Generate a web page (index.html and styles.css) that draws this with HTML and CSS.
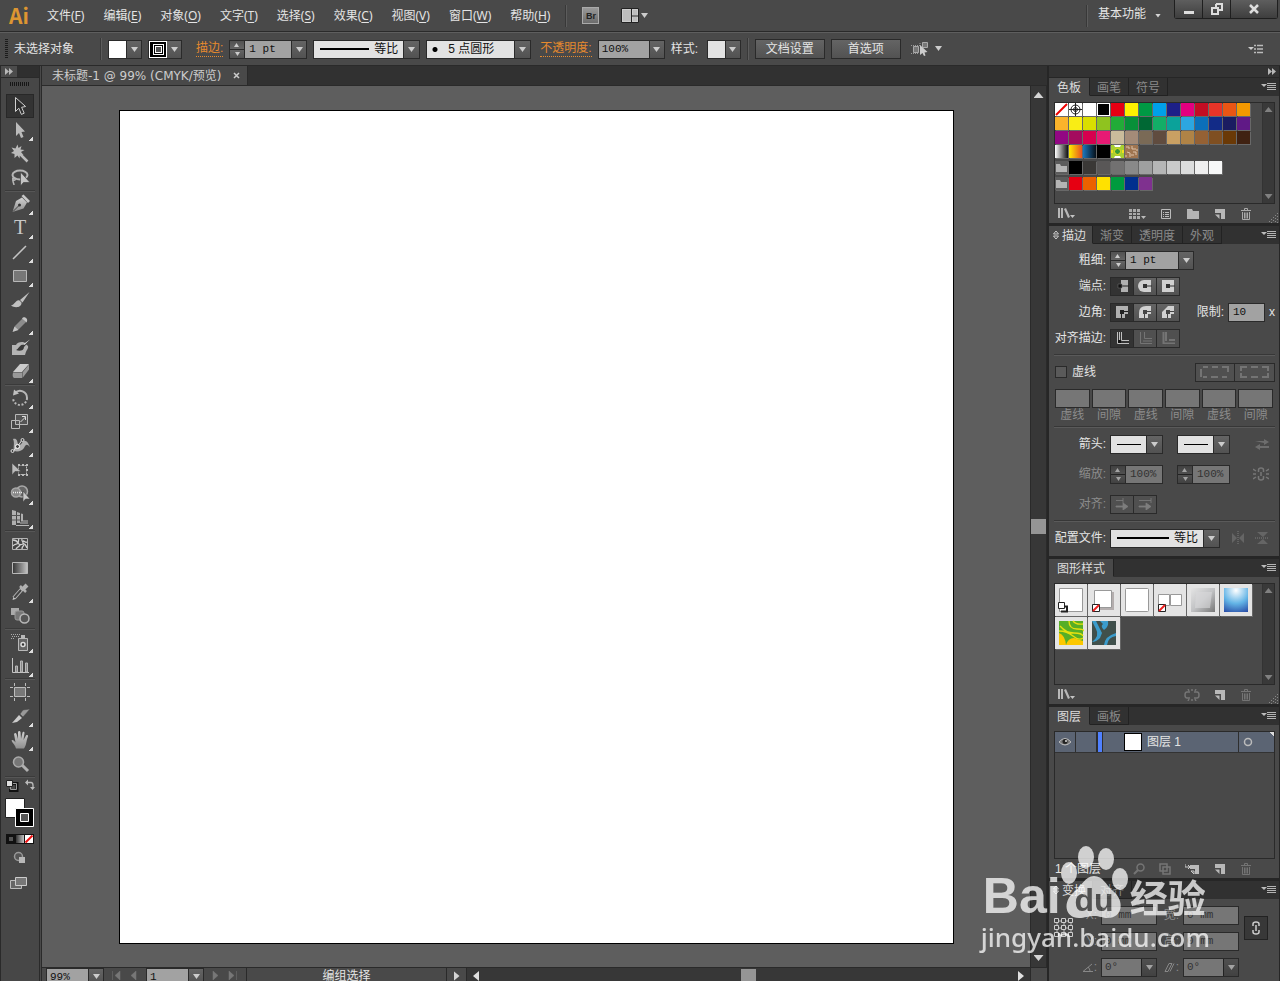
FILE: index.html
```html
<!DOCTYPE html>
<html lang="zh-CN">
<head>
<meta charset="utf-8">
<title>未标题-1</title>
<link rel="stylesheet" href="styles.css">
</head>
<body>
<svg class="defs" aria-hidden="true">
  <defs>
    <linearGradient id="metal" x1="0" y1="0" x2="0" y2="1"><stop offset="0" stop-color="#d2d2d2"/><stop offset="1" stop-color="#8e8e8e"/></linearGradient>
    <linearGradient id="fade" x1="0" y1="0" x2="1" y2="0"><stop offset="0" stop-color="#333"/><stop offset="1" stop-color="#c4c4c4"/></linearGradient>
    <radialGradient id="sky" cx=".5" cy=".1" r="1"><stop offset="0" stop-color="#fff"/><stop offset=".55" stop-color="#63b4e6"/><stop offset="1" stop-color="#2a4fa8"/></radialGradient>
    <linearGradient id="silver" x1="0" y1="0" x2="1" y2="1"><stop offset="0" stop-color="#e4e4e4"/><stop offset=".5" stop-color="#c2c3c5"/><stop offset="1" stop-color="#777"/></linearGradient>
  </defs>
  <symbol id="i-menu" viewBox="0 0 15 9"><path d="M0 2h6L3 5z" fill="#bbb"/><path d="M6 1.500h9M6 3.500h9M6 5.500h9M6 7.500h9" stroke="#b4b4b4"/></symbol>
  <symbol id="i-lib" viewBox="0 0 18 13"><path d="M1 1h2v10H1zM4 1h2v10H4zM7 2l2-1 4 9-2 1z" fill="#b8b8b8"/><path d="M13 8h5l-2.500 3z" fill="#c4c4c4"/></symbol>
  <symbol id="i-new" viewBox="0 0 12 12"><path d="M1 1h10v10H7V5H1z" fill="#b8b8b8"/><path d="M1 6.500h4.500v4.500z" fill="#b8b8b8"/></symbol>
  <symbol id="i-trash" viewBox="0 0 12 12"><path d="M1 2.500h10M4.500 2V.5h3V2M2.500 4v7.500h7V4M4.500 4.500v6M6 4.500v6M7.500 4.500v6" fill="none" stroke="#aaa"/></symbol>
  <symbol id="i-folder" viewBox="0 0 13 13"><path d="M1 3h4l1 2h6v6H1z" fill="#b4b4b4"/></symbol>
  <symbol id="i-grip" viewBox="0 0 10 10"><path d="M8 0h1v1H8zM6 2h1v1H6zM8 3h1v1H8zM4 4h1v1H4zM6 5h1v1H6zM8 6h1v1H8zM2 6h1v1H2zM4 7h1v1H4zM6 8h1v1H6zM8 9h1v1H8zM0 8h1v1H0zM2 9h1v1H2z" fill="#888"/></symbol>
  <symbol id="i-more" viewBox="0 0 8 7"><path d="M0 0l4 3.500L0 7zM4 0l4 3.500L4 7z" fill="#b8b8b8"/></symbol>
  <symbol id="i-sort" viewBox="0 0 6 10"><path d="M.5 4L3 1l2.500 3zM.5 6L3 9l2.500-3z" fill="none" stroke="#ccc"/></symbol>
  <symbol id="i-none" viewBox="0 0 8 8"><path d="M.5.500h7v7h-7z" fill="#fff" stroke="#222"/><path d="M1 7l6-6" stroke="#e22" stroke-width="2"/></symbol>
</svg>

<div class="app">
  <header class="menubar">
    <span class="logo">Ai</span>
    <nav class="menus">
      <button>文件(<u>F</u>)</button><button>编辑(<u>E</u>)</button><button>对象(<u>O</u>)</button><button>文字(<u>T</u>)</button><button>选择(<u>S</u>)</button><button>效果(<u>C</u>)</button><button>视图(<u>V</u>)</button><button>窗口(<u>W</u>)</button><button>帮助(<u>H</u>)</button>
    </nav>
    <span class="vsep"></span>
    <button class="bridge">Br</button>
    <button class="arrange" aria-label="排列文档"><svg width="27" height="16" viewBox="0 0 27 16"><path d="M.5.500h17v14H.5z" fill="#ccc" stroke="#222"/><path d="M2 2h8v11H2zM12 2h4v5h-4zM12 9h4v4h-4z" fill="#bdbdbd"/><path d="M10.500 1v13M11 8h6" stroke="#222"/><path d="M20 5h7l-3.500 5z" fill="#ccc"/></svg></button>
    <div class="right">
      <span class="vsep"></span>
      <button class="workspace">基本功能<span class="tri small"></span></button>
      <div class="winbtns">
        <button aria-label="最小化"><svg width="12" height="12"><path d="M1 8h10v3H1z" fill="#ddd"/></svg></button>
        <button aria-label="还原"><svg width="12" height="12"><path d="M5 1h6v6H8M1 5h6v6H1zM5 5V1" fill="none" stroke="#ddd" stroke-width="2"/></svg></button>
        <button class="close" aria-label="关闭"><svg width="12" height="12"><path d="M2 2l8 8M10 2l-8 8" stroke="#ddd" stroke-width="2.500"/></svg></button>
      </div>
    </div>
  </header>

  <div class="options">
    <span class="vgrip"></span>
    <span class="state">未选择对象</span>
    <span class="vsep"></span>
    <button class="picker" aria-label="填色"><span class="chip white"></span><span class="arr"></span></button>
    <button class="picker" aria-label="描边颜色"><span class="chip ring"></span><span class="arr"></span></button>
    <label class="hot first" for="sw1">描边:</label>
    <div class="combo w78"><span class="spin"><button aria-label="增加"></button><button aria-label="减少"></button></span><input id="sw1" value="1 pt"><button class="arr" aria-label="列表"></button></div>
    <div class="drop w107"><select class="uniform" aria-label="宽度配置"><option>等比</option></select></div>
    <div class="drop w105"><select class="dot" aria-label="画笔"><option>5 点圆形</option></select></div>
    <label class="hot" for="op1">不透明度:</label>
    <div class="combo w67"><input class="flush" id="op1" value="100%"><button class="arr" aria-label="列表"></button></div>
    <span class="stylelab">样式:</span>
    <button class="picker" aria-label="样式"><span class="chip light"></span><span class="arr"></span></button>
    <span class="vsep"></span>
    <button class="push">文档设置</button>
    <button class="push">首选项</button>
    <button class="similar" aria-label="选择类似的对象"><svg width="32" height="16" viewBox="0 0 32 16"><path d="M2.500 5.500h5v6h-5zM11.500 1.500h5v5h-5z" fill="#777" stroke="#aaa"/><path d="M0 4.500h10M0 12.500h8M9 2v4" stroke="#999" stroke-dasharray="1 1"/><path d="M9 4v10l2.500-2 1.500 3 1.500-.5-1-3 3-.5z" fill="#ccc"/><path d="M24 5h7l-3.500 5z" fill="#ccc"/></svg></button>
    <button class="optmenu" aria-label="面板菜单"><svg width="15" height="10"><path d="M0 3h6L3 6z" fill="#ccc"/><path d="M6 1.500h2M9 1.500h6M6 5h2M9 5h6M6 8.500h2M9 8.500h6" stroke="#bbb" stroke-width="1.500"/></svg></button>
  </div>

  <div class="work">
    <aside class="toolbox">
      <div class="collapse"><button aria-label="展开"><svg width="8" height="7"><use href="#i-more"/></svg></button></div>
      <div class="hgrip"></div>
      <div class="tools">
        <button class="tool on" aria-label="选择"><svg viewBox="0 0 28 24"><path d="M9.500 3.500v14l3.300-3.300 2.600 6.200 2.800-1.200-2.600-5.900 4-.8z" fill="#2c2c2c" stroke="#d0d0d0"/></svg></button>
        <button class="tool more" aria-label="直接选择"><svg viewBox="0 0 28 24"><path d="M10 4v14l3-3 2 5 2.500-1-2-5 3.500-.5z" fill="#bbb"/></svg></button>
        <button class="tool" aria-label="魔棒"><svg viewBox="0 0 28 24"><path d="M11.500 2.500l1 3.500 3-2-1 3.500 4 .5-3.500 2 2.500 3-3.500-.5-.5 4-2-3-3 2.500v-4l-3.500-1L8 9 5.500 5.500l4 1z" fill="#bbb"/><path d="M13 11l8.500 8.500" stroke="#bbb" stroke-width="2.500"/></svg></button>
        <button class="tool" aria-label="套索"><svg viewBox="0 0 28 24"><ellipse cx="14" cy="9" rx="7.500" ry="4.500" fill="none" stroke="#b5b5b5" stroke-width="2"/><path d="M8 11c-3 2 0 4 1 3s-1-3-2-1 1 4 1 6" fill="none" stroke="#b5b5b5" stroke-width="1.500"/><path d="M14.500 6v14l3-3.500H24z" fill="#c4c4c4" stroke="#444" stroke-width=".7"/></svg></button>
        <hr>
        <button class="tool more" aria-label="钢笔"><svg viewBox="0 0 28 24"><path d="M6.500 20l3.500-11 6-3.500 5 5-3.500 6z" fill="url(#metal)"/><path d="M15.500 4l2-1.500L24 9l-2 2z" fill="#c8c8c8"/><path d="M7 19.500l6-6" stroke="#444"/><circle cx="13.500" cy="13" r="1.500" fill="#333"/></svg></button>
        <button class="tool more" aria-label="文字"><svg viewBox="0 0 28 24"><text x="14" y="18" text-anchor="middle" class="tglyph">T</text></svg></button>
        <button class="tool more" aria-label="直线段"><svg viewBox="0 0 28 24"><path d="M7 19L20 6" stroke="#c4c4c4" stroke-width="1.500"/></svg></button>
        <button class="tool more" aria-label="矩形"><svg viewBox="0 0 28 24"><path d="M7.500 6.500h13v11h-13z" fill="#777" stroke="#b8b8b8"/></svg></button>
        <button class="tool" aria-label="画笔"><svg viewBox="0 0 28 24"><path d="M23.500 4L14 12l2.500 2.500zM13.500 12.500c-4-1-4 4-8.500 5 4 3 11 2 10.500-3z" fill="#c0c0c0"/></svg></button>
        <button class="tool more" aria-label="铅笔"><svg viewBox="0 0 28 24"><path d="M6.500 20l2-6 8-8 4 4-8 8z" fill="#8c8c8c" stroke="#333" stroke-width=".6"/><path d="M6.500 20l2-5.500 4 3.500zM16 6.500c2-3 7 0 4.500 4z" fill="#c4c4c4"/></svg></button>
        <button class="tool" aria-label="斑点画笔"><svg viewBox="0 0 28 24"><path d="M6 9h4c1-3 7-4 9-2 1 2 4 2 3 5-1 2-2 3-3 7H6z" fill="#b4b4b4"/><path d="M24 4l-7 5 1 2zM17 9c-3-1-4 4-7 5 3 1.500 8 1 8-3z" fill="#3a3a3a"/><path d="M24 3.500L17.500 8l1 1z" fill="#ddd"/></svg></button>
        <button class="tool more" aria-label="橡皮擦"><svg viewBox="0 0 28 24"><path d="M7 12l7-8h9l-7 8z" fill="#ccc"/><path d="M7 12.500h9V18H8q-2-1-1-5.500zM16.500 12.500l6.500-8v5L16.500 18z" fill="#999"/></svg></button>
        <hr>
        <button class="tool more" aria-label="旋转"><svg viewBox="0 0 28 24"><path d="M9 7a7 7 0 0 1 12 5" fill="none" stroke="#b8b8b8" stroke-width="2"/><path d="M21 12a7 7 0 0 1-14 0" fill="none" stroke="#b8b8b8" stroke-width="2" stroke-dasharray="2 1.700"/><path d="M7 9.500l1-6 5 4z" fill="#c0c0c0"/></svg></button>
        <button class="tool more" aria-label="比例缩放"><svg viewBox="0 0 28 24"><path d="M9.500 4.500h12v10h-12z" fill="#555" stroke="#b8b8b8"/><path d="M5.500 10.500h8v8h-8z" fill="none" stroke="#b8b8b8"/><path d="M14.500 12l5-5M16 6.500h3.500V10" fill="none" stroke="#ddd"/></svg></button>
        <button class="tool more" aria-label="宽度"><svg viewBox="0 0 28 24"><path d="M7 5c4-1 4 2 5 5l2 1 2-2c1-3 4-3 6 0l2 4c-3-3-4-3-6 1-2 3-6 4-10 3-1-4 1-8-1-12z" fill="#b0b0b0"/><path d="M7 17l5-5 4-6" stroke="#e0e0e0" fill="none"/><circle cx="6.500" cy="17" r="1.500" fill="#444" stroke="#ddd"/><circle cx="11.500" cy="12.500" r="2" fill="#444" stroke="#fff"/><circle cx="16.500" cy="6" r="1.500" fill="#444" stroke="#ddd"/></svg></button>
        <button class="tool" aria-label="自由变换"><svg viewBox="0 0 28 24"><path d="M12.500 7.500h8v9h-8z" fill="none" stroke="#bbb" stroke-dasharray="2 1"/><path d="M12 6h2v2h-2zM16 6h2v2h-2zM20 6h2v2h-2zM20 11h2v2h-2zM20 16h2v2h-2zM16 16h2v2h-2zM12 16h2v2h-2z" fill="#bbb"/><path d="M6 5v12l3-3.500h6z" fill="#bbb" stroke="#444" stroke-width=".6"/></svg></button>
        <button class="tool more" aria-label="形状生成器"><svg viewBox="0 0 28 24"><circle cx="16" cy="9.500" r="5.500" fill="#666" stroke="#a8a8a8" stroke-width="1.500"/><circle cx="10" cy="10.500" r="4.500" fill="#888" stroke="#a8a8a8" stroke-width="1.500"/><path d="M7 10.500h10" stroke="#eee" stroke-dasharray="1 1" stroke-width="1.500"/><path d="M17 9v11l2.500-3H24z" fill="#c8c8c8" stroke="#444" stroke-width=".6"/></svg></button>
        <button class="tool more" aria-label="透视网格"><svg viewBox="0 0 28 24"><path d="M6 4l4 1v14H6zM11 6l3 1v10h-3zM15 7.500l2 .5v7.500h-2z" fill="#b0b0b0"/><path d="M6 9.500h8M6 14h8" stroke="#555"/><path d="M10 19.500h13M14 17h8M17 15h5" stroke="#b8b8b8" stroke-width="1.200"/></svg></button>
        <hr>
        <button class="tool" aria-label="网格"><svg viewBox="0 0 28 24"><path d="M6.500 6.500h15v11h-15z" fill="#444" stroke="#b4b4b4"/><path d="M7 8c3 0 4 1 5 3s3 2 5 1 3 2 4 4M7 14c2-3 4-1 5-3s0-3 1-4M10 17c1-2 3-2 4-4M16 7c-1 2 2 3 1 5M17 9c2 0 2 2 4 1M16 17c0-2 1-3 2-4" fill="none" stroke="#d0d0d0" stroke-width="1.300"/></svg></button>
        <button class="tool" aria-label="渐变"><svg viewBox="0 0 28 24"><path d="M6.500 6.500h15v11h-15z" fill="url(#fade)" stroke="#b8b8b8"/></svg></button>
        <button class="tool more" aria-label="吸管"><svg viewBox="0 0 28 24"><path d="M8 18l8-9" stroke="#bbb" stroke-width="4"/><path d="M8 18l7-8" stroke="#444" stroke-width="2"/><path d="M6.500 20l1-3 2 2z" fill="#ccc"/><path d="M14 6l6 6" stroke="#b0b0b0" stroke-width="2.500"/><path d="M17 9l4-4" stroke="#b0b0b0" stroke-width="4"/></svg></button>
        <button class="tool" aria-label="混合"><svg viewBox="0 0 28 24"><path d="M5 4h8v7H5z" fill="#aaa"/><rect x="9" y="7" width="9" height="9" rx="2" fill="#777" stroke="#999"/><circle cx="18.500" cy="14.500" r="4.500" fill="#555" stroke="#b8b8b8" stroke-width="1.500"/></svg></button>
        <hr>
        <button class="tool more" aria-label="符号喷枪"><svg viewBox="0 0 28 24"><path d="M12.500 8.500h9v12h-9z" fill="#666" stroke="#b8b8b8"/><path d="M15 5h4v3h-4z" fill="#b8b8b8"/><circle cx="17" cy="14.500" r="2" fill="#333" stroke="#ddd" stroke-width="1.500"/><path d="M5 4.500h9M6 6.500h8M5 8.500h4" stroke="#aaa" stroke-dasharray="1 1"/></svg></button>
        <button class="tool more" aria-label="柱形图"><svg viewBox="0 0 28 24"><path d="M6.500 4v14.500H23" fill="none" stroke="#c4c4c4"/><path d="M9.500 12h2v6h-2zM14.500 7h2v11h-2zM19.500 9h2v9h-2z" fill="#888" stroke="#b8b8b8"/></svg></button>
        <hr>
        <button class="tool" aria-label="画板"><svg viewBox="0 0 28 24"><path d="M8.500 7.500h11v9h-11z" fill="#777" stroke="#bbb"/><path d="M8.500 3v3M19.500 3v3M8.500 18v3M19.500 18v3M4 7.500h3M21 7.500h3M4 16.500h3M21 16.500h3" stroke="#bbb"/></svg></button>
        <button class="tool more" aria-label="切片"><svg viewBox="0 0 28 24"><path d="M6 19l7-8 3 3-5 4z" fill="#ccc"/><path d="M14 10l3-4 7-1-7 8z" fill="#999" stroke="#444" stroke-width=".5"/></svg></button>
        <button class="tool more" aria-label="抓手"><svg viewBox="0 0 28 24"><path d="M10 20.500c-1-4-3-4.500-4.500-8 1-1.500 2.500 0 4 2L8 6c1-1.500 2-1 2.500 0l1.500 5V4c.5-1.500 2-1.500 2.500 0l.5 7 1.500-6.500c.5-1 2-1 2 .5L17.500 12l2.500-4.500c1-1 2.500 0 2 1-2 5-1.500 9-4 12z" fill="url(#metal)"/></svg></button>
        <button class="tool" aria-label="缩放"><svg viewBox="0 0 28 24"><path d="M16 13l6 6" stroke="#b0b0b0" stroke-width="3"/><circle cx="12.500" cy="10" r="5" fill="#777" stroke="#aaa" stroke-width="1.500"/></svg></button>
        <hr>
      </div>
      <svg class="paint" viewBox="0 0 30 118">
        <path d="M6 5.500h6v7H4" fill="none" stroke="#111" stroke-width="3"/><path d="M1.500 2.500h6v6h-6z" fill="#ddd" stroke="#222"/><path d="M8 5.500h3.500v6h-6V9" fill="none" stroke="#999"/>
        <path d="M22 4.500h4q2 0 2 3v3" fill="none" stroke="#bbb" stroke-width="1.300"/><path d="M23 1.500v6l-3-3zM25 9h5l-2.500 3z" fill="#bbb"/>
        <path d="M.5 20.500h19v19H.5z" fill="#fff" stroke="#222"/>
        <path d="M10.500 30.500h18v18h-18z" fill="#000" stroke="#fff"/><path d="M15.500 35.500h8v8h-8z" fill="#555" stroke="#fff"/>
        <path d="M1 56h28v10H1z" fill="#111"/><path d="M4 59h4v4H4z" fill="#555"/><path d="M11 57h8v8h-8z" fill="url(#fade)"/><path d="M20 57h8v8h-8z" fill="#fff"/><path d="M20.500 64.500l7-7" stroke="#e11" stroke-width="2"/>
        <circle cx="13.500" cy="78.500" r="4" fill="#555" stroke="#999" stroke-width="1.500"/><path d="M14 79h6v6h-6z" fill="#b8b8b8"/>
        <path d="M5.500 102.500h11v8h-11z" fill="#666" stroke="#bbb"/><path d="M10.500 99.500h11v8h-11z" fill="#777" stroke="#ccc"/>
      </svg>
    </aside>

    <main class="doc">
      <div class="doctabs"><div class="doctab">未标题-1 @ 99% (CMYK/预览)<button aria-label="关闭文档"><svg width="7" height="7"><path d="M1 1l5 5M6 1L1 6" stroke="#ccc" stroke-width="1.500"/></svg></button></div></div>
      <div class="view">
        <div class="canvas"><div class="artboard"></div></div>
        <div class="vscroll"><span class="tri up"></span><span class="thumb"></span><span class="tri"></span></div>
      </div>
      <footer class="status">
        <div class="combo w58"><input class="flush" value="99%" aria-label="缩放比例"><button class="arr" aria-label="列表"></button></div>
        <svg class="nav" width="26" height="9"><path d="M.5 0v9M8 0v9L3 4.500zM24 0v9l-5-4.500z" fill="#777" stroke="#777" stroke-width=".5"/></svg>
        <div class="combo w58"><input class="flush" value="1" aria-label="画板"><button class="arr" aria-label="列表"></button></div>
        <svg class="nav" width="26" height="9"><path d="M1 0v9l5-4.500zM17 0v9l5-4.500zM24.500 0v9" fill="#777" stroke="#777" stroke-width=".5"/></svg>
        <div class="toolname">编组选择</div>
        <span class="play"><i class="tri rt"></i></span>
        <div class="hscroll"><i class="tri lt"></i><span class="thumb"></span><i class="tri rt"></i></div>
        <span class="corner"></span>
      </footer>
    </main>

    <aside class="dock">
      <div class="dockhead"><svg width="8" height="7"><use href="#i-more"/></svg></div>

      <section class="panel">
        <div class="tabs"><button class="on">色板</button><button>画笔</button><button>符号</button><svg class="fly" width="15" height="9"><use href="#i-menu"/></svg></div>
        <div class="body">
          <div class="list h102">
            <div class="swatches">
              <div class="sws">
                <button class="sw" aria-label="无"><svg width="13" height="13"><path d="M0 0h13v13H0z" fill="#fff"/><path d="M1 12L12 1" stroke="#e00" stroke-width="2"/></svg></button><button class="sw" aria-label="套版色"><svg width="13" height="13"><path d="M0 0h13v13H0z" fill="#fff"/><circle cx="6.500" cy="6.500" r="4.500" fill="none" stroke="#222"/><circle cx="6.500" cy="6.500" r="2" fill="none" stroke="#222"/><path d="M6.500 0v13M0 6.500h13" stroke="#222"/></svg></button><button class="sw" style="background:#fff"></button><button class="sw sel" style="background:#000"></button><button class="sw" style="background:#e60012"></button><button class="sw" style="background:#fff100"></button><button class="sw" style="background:#009944"></button><button class="sw" style="background:#00a0e9"></button><button class="sw" style="background:#1d2088"></button><button class="sw" style="background:#e4007f"></button><button class="sw" style="background:#c30d23"></button><button class="sw" style="background:#e83428"></button><button class="sw" style="background:#ea5514"></button><button class="sw" style="background:#f39800"></button>
                <button class="sw" style="background:#fbb32b"></button><button class="sw" style="background:#f9ed15"></button><button class="sw" style="background:#dade00"></button><button class="sw" style="background:#8fc31f"></button><button class="sw" style="background:#22ac38"></button><button class="sw" style="background:#079039"></button><button class="sw" style="background:#006834"></button><button class="sw" style="background:#13ae67"></button><button class="sw" style="background:#0ba29a"></button><button class="sw" style="background:#2ca6e0"></button><button class="sw" style="background:#0b6fb9"></button><button class="sw" style="background:#122b87"></button><button class="sw" style="background:#1b1c61"></button><button class="sw" style="background:#601986"></button>
                <button class="sw" style="background:#920783"></button><button class="sw" style="background:#a40b5e"></button><button class="sw" style="background:#d7004f"></button><button class="sw" style="background:#e71a74"></button><button class="sw" style="background:#cabc9b"></button><button class="sw" style="background:#a48b78"></button><button class="sw" style="background:#7a6a56"></button><button class="sw" style="background:#604c3f"></button><button class="sw" style="background:#c9a063"></button><button class="sw" style="background:#b08346"></button><button class="sw" style="background:#956134"></button><button class="sw" style="background:#7f4f21"></button><button class="sw" style="background:#6a3906"></button><button class="sw" style="background:#402212"></button>
                <button class="sw" style="background:linear-gradient(90deg,#fff,#111)"></button><button class="sw" style="background:linear-gradient(90deg,#fff000,#e85020)"></button><button class="sw" style="background:linear-gradient(90deg,#1b75bb,#061018)"></button><button class="sw" style="background:#000"></button><button class="sw" aria-label="图案 1"><svg width="13" height="13"><path d="M0 0h13v13H0z" fill="#fff"/><path d="M0 0h3l1 2h5l1-2h3v13h-3l-1-2H4l-1 2H0z" fill="#a8d030"/><path d="M0 5h2v3H0zM11 5h2v3h-2z" fill="#f3e020"/><circle cx="6.500" cy="6.500" r="3" fill="#3a9c36" stroke="#f3e020"/></svg></button><button class="sw" aria-label="图案 2"><svg width="13" height="13"><path d="M0 0h13v13H0z" fill="#a07550"/><path d="M1 2h3v2M7 1v3h4M2 7l3 1v4M8 7h3v3M6 10h3M0 11h2M11 5h2" fill="none" stroke="#dcc3aa"/></svg></button>
              </div>
              <div class="sws">
                <button class="sw fold" aria-label="灰度"><svg width="13" height="13"><use href="#i-folder"/></svg></button><button class="sw" style="background:#000"></button><button class="sw" style="background:#3a3836"></button><button class="sw" style="background:#595757"></button><button class="sw" style="background:#727171"></button><button class="sw" style="background:#898989"></button><button class="sw" style="background:#9fa0a0"></button><button class="sw" style="background:#b5b6b6"></button><button class="sw" style="background:#c9caca"></button><button class="sw" style="background:#dcdddd"></button><button class="sw" style="background:#efefef"></button><button class="sw" style="background:#f7f8f8"></button>
              </div>
              <div class="sws">
                <button class="sw fold" aria-label="明亮"><svg width="13" height="13"><use href="#i-folder"/></svg></button><button class="sw" style="background:#e60012"></button><button class="sw" style="background:#eb6100"></button><button class="sw" style="background:#ffe100"></button><button class="sw" style="background:#009b3e"></button><button class="sw" style="background:#002f8e"></button><button class="sw" style="background:#7f318f"></button>
              </div>
            </div>
            <div class="pscroll"><span class="tri up dim"></span><span class="tri dim"></span></div>
          </div>
          <div class="foot">
            <svg class="lib" width="18" height="13"><use href="#i-lib"/></svg>
            <div class="icons"><svg width="17" height="12"><path d="M0 1h3v3H0zM4 1h3v3H4zM8 1h3v3H8zM0 5h3v2H0zM4 5h3v2H4zM8 5h3v2H8zM0 8h3v3H0zM4 8h3v3H4zM8 8h3v3H8z" fill="#aaa"/><path d="M12 8h5l-2.500 3z" fill="#bbb"/></svg><svg width="12" height="12"><path d="M1.500 1.500h9v9h-9z" fill="none" stroke="#bbb"/><path d="M3 4.500h1M5 4.500h4M3 6.500h1M5 6.500h4M3 8.500h1M5 8.500h4" stroke="#bbb"/></svg><svg width="14" height="12"><path d="M1 1h5l1 2h6v8H1z" fill="#b4b4b4"/></svg><svg width="12" height="12"><use href="#i-new"/></svg><svg width="12" height="12"><use href="#i-trash"/></svg></div>
            <svg class="grip" width="10" height="10"><use href="#i-grip"/></svg>
          </div>
        </div>
      </section>

      <section class="panel">
        <div class="tabs"><button class="on sort"><svg width="6" height="10"><use href="#i-sort"/></svg>描边</button><button>渐变</button><button>透明度</button><button>外观</button><svg class="fly" width="15" height="9"><use href="#i-menu"/></svg></div>
        <div class="body stroke">
          <div class="row"><label class="lab" for="sw2">粗细:</label><div class="combo w84"><span class="spin"><button aria-label="增加"></button><button aria-label="减少"></button></span><input id="sw2" value="1 pt"><button class="arr" aria-label="列表"></button></div></div>
          <div class="row"><span class="lab">端点:</span><div class="seg"><button class="on" aria-label="平头"><svg width="14" height="12"><path d="M6 0h7v12H6z" fill="#b0b0b0"/><path d="M6 6h8" stroke="#222"/><path d="M3 4h4v4H3z" fill="#111" stroke="#777" stroke-width=".5"/></svg></button><button aria-label="圆头"><svg width="14" height="12"><path d="M13 0v12H6A6 6 0 0 1 6 0z" fill="#d0d0d0"/><path d="M6 6h8" stroke="#333"/><path d="M5 4h4v4H5z" fill="#333"/></svg></button><button aria-label="方头"><svg width="14" height="12"><path d="M1 0h12v12H1z" fill="#d0d0d0"/><path d="M6 6h8" stroke="#333"/><path d="M5 4h4v4H5z" fill="#333"/></svg></button></div></div>
          <div class="row"><span class="lab">边角:</span><div class="seg"><button class="on" aria-label="斜接"><svg width="14" height="12"><path d="M1 0h12v8h-3v4H1z" fill="#b0b0b0"/><path d="M6.500 12V5.500H13" fill="none" stroke="#222"/><path d="M5 4h4v4H5z" fill="#222"/></svg></button><button aria-label="圆角"><svg width="14" height="12"><path d="M13 0v8h-3v4H1V7q0-7 7-7z" fill="#d0d0d0"/><path d="M6.500 12V5.500H13" fill="none" stroke="#444"/><path d="M5 4h4v4H5z" fill="#444"/></svg></button><button aria-label="斜角"><svg width="14" height="12"><path d="M13 0v8h-3v4H1V6l6-6z" fill="#d0d0d0"/><path d="M6.500 12V5.500H13" fill="none" stroke="#444"/><path d="M5 4h4v4H5z" fill="#444"/></svg></button></div><div class="limit"><label for="lim">限制:</label><input class="box" id="lim" value="10"><span>x</span></div></div>
          <div class="row"><span class="lab">对齐描边:</span><div class="seg"><button class="on" aria-label="居中"><svg width="14" height="12"><path d="M2.500 0v11.500H14M6.500 0v8.500H14M4.500 0v9" fill="none" stroke="#c0c0c0"/><path d="M3 8h3v3H3z" fill="#111"/></svg></button><button disabled aria-label="内侧"><svg width="14" height="12"><path d="M2.500 0v11.500H14M6.500 0v6.500H14M5 9h9" fill="none" stroke="#999"/></svg></button><button disabled aria-label="外侧"><svg width="14" height="12"><path d="M2.500 0v11.500H14M5 0v9M8 8h6" fill="none" stroke="#999" stroke-width="2"/></svg></button></div></div>
          <hr>
          <div class="row dashrow"><input type="checkbox" id="dash"><label for="dash">虚线</label><div class="seg wide"><button disabled aria-label="保留虚线"><svg width="30" height="12"><path d="M1 11V3M3 1h5M12 1h6M22 1h6v5M3 11h4M11 11h7M22 11h5" fill="none" stroke="#999" stroke-width="2"/></svg></button><button disabled aria-label="对齐虚线"><svg width="30" height="12"><path d="M1 5V1h6M11 1h7M22 1h6v4M1 7v4h6M11 11h7M22 11h6V7" fill="none" stroke="#999" stroke-width="2"/></svg></button></div></div>
          <div class="dashes">
            <label><input disabled>虚线</label><label><input disabled>间隙</label><label><input disabled>虚线</label><label><input disabled>间隙</label><label><input disabled>虚线</label><label><input disabled>间隙</label>
          </div>
          <hr>
          <div class="row tall"><span class="lab">箭头:</span><div class="drop w53"><select class="plain" aria-label="起点箭头"><option></option></select></div><div class="drop w53 second"><select class="plain" aria-label="终点箭头"><option></option></select></div><svg class="end off" width="14" height="12"><path d="M0 3h9V1l5 3-5 3V5M14 8H5V6L0 9l5 3v-2h9" fill="#999"/></svg></div>
          <div class="row tall dimmed"><label class="lab" for="sc1">缩放:</label><div class="combo w53"><span class="spin"><button disabled></button><button disabled></button></span><input id="sc1" value="100%" disabled></div><div class="combo w53 second"><span class="spin"><button disabled></button><button disabled></button></span><input value="100%" aria-label="终点缩放" disabled></div><svg class="end" width="16" height="14"><path d="M5.500 5V3q0-2 2.500-2t2.500 2v2M5.500 9v2q0 2 2.500 2t2.500-2V9M8 5v4M0 2l3 2M0 7h3M0 12l3-2M16 2l-3 2M16 7h-3M16 12l-3-2" fill="none" stroke="#777" stroke-width="1.500"/></svg></div>
          <div class="row tall dimmed"><span class="lab">对齐:</span><div class="seg"><button disabled aria-label="扩展"><svg width="14" height="12"><path d="M1 2.500h7M8 0v5M1 8h7V5l5 3.500L8 12V9H1z" fill="#aaa" stroke="#aaa" stroke-width=".8"/></svg></button><button disabled aria-label="末端"><svg width="14" height="12"><path d="M1 2.500h12M13 0v5M1 8h7V5l5 3.500L8 12V9H1z" fill="#aaa" stroke="#aaa" stroke-width=".8"/></svg></button></div></div>
          <hr>
          <div class="row tall"><label class="lab" for="prof">配置文件:</label><div class="drop w110"><select class="uniform long" id="prof"><option>等比</option></select></div><svg class="end off" width="38" height="14"><path d="M1 2v10l5-5zM13 2v10L8 7zM26 1h11l-5 5zM26 13h11l-5-5z" fill="#888"/><path d="M7 0v14M24 7h14" stroke="#bbb" stroke-dasharray="1 1"/></svg></div>
        </div>
      </section>

      <section class="panel">
        <div class="tabs"><button class="on">图形样式</button><svg class="fly" width="15" height="9"><use href="#i-menu"/></svg></div>
        <div class="body">
          <div class="list h102">
            <div class="styles">
              <button aria-label="默认"><svg width="32" height="32"><path d="M4.500 4.500h23v23h-23z" fill="#fff" stroke="#999"/><path d="M7 22.500h5v5H6" fill="none" stroke="#222" stroke-width="2"/><path d="M3.500 18.500h6v6h-6z" fill="#fff" stroke="#222"/></svg></button>
              <button aria-label="投影"><svg width="32" height="32"><path d="M8 8h18v18H8z" fill="#b4aeae"/><path d="M6.500 6.500h17v17h-17z" fill="#fff" stroke="#999"/><use href="#i-none" x="4" y="20" width="8" height="8"/></svg></button>
              <button aria-label="圆角"><svg width="32" height="32"><rect x="4.500" y="4.500" width="23" height="23" rx="1" fill="#fff" stroke="#999"/></svg></button>
              <button aria-label="实时对称"><svg width="32" height="32"><path d="M4.500 10.500h11v11h-11zM16.500 10.500h11v11h-11z" fill="#fff" stroke="#999"/><use href="#i-none" x="4" y="20" width="8" height="8"/></svg></button>
              <button aria-label="斜面"><svg width="32" height="32"><path d="M4 4h24v24H4z" fill="url(#silver)"/><path d="M9 8h16l-2 16H8z" fill="#d8d9db" opacity=".6"/></svg></button>
              <button aria-label="蓝色"><svg width="32" height="32"><path d="M4 4h24v24H4z" fill="url(#sky)"/></svg></button>
              <button aria-label="绿叶"><svg width="32" height="32"><path d="M4 4h24v24H4z" fill="#57ae27"/><path d="M11 28q2-7 8-7l9 3v4zM4 16q6 2 7 12H4z" fill="#fcc800"/><path d="M4 14q8 0 14 5t10 2M5 9q6 7 14 7t9 3M14 4q0 8 8 8t6 2M18 4q3 4 10 3" fill="none" stroke="#e6e010" stroke-width="1.300"/></svg></button>
              <button aria-label="蓝纹"><svg width="32" height="32"><path d="M4 4h24v24H4z" fill="#40504c"/><path d="M4 4h4l6 12-2 5q-4 4-8 4 8-6 4-13zM12 4h8q1 6-4 9-4-4-1-6M16 28q1-9 12-12v3q-8 1-9 9z" fill="#3b9ccc"/></svg></button>
            </div>
            <div class="pscroll"><span class="tri up dim"></span><span class="tri dim"></span></div>
          </div>
          <div class="foot"><svg class="lib" width="18" height="13"><use href="#i-lib"/></svg><div class="icons"><svg class="off" width="16" height="12"><path d="M6 3H3Q1 3 1 6t2 3h3M10 3h3q2 0 2 3t-2 3h-3M8 0v2M8 10v2M4 0l1 2M12 0l-1 2M4 12l1-2M12 12l-1-2" fill="none" stroke="#aaa" stroke-width="1.500"/></svg><svg width="12" height="12"><use href="#i-new"/></svg><svg class="off" width="12" height="12"><use href="#i-trash"/></svg></div><svg class="grip" width="10" height="10"><use href="#i-grip"/></svg></div>
        </div>
      </section>

      <section class="panel">
        <div class="tabs"><button class="on">图层</button><button>画板</button><svg class="fly" width="15" height="9"><use href="#i-menu"/></svg></div>
        <div class="body">
          <div class="list layers">
            <div class="layer"><span class="eye"><svg width="14" height="10"><path d="M1 5q6-7 12 0-6 6-12 0z" fill="#777" stroke="#bbb"/><circle cx="7" cy="4.500" r="2.500" fill="#222"/><circle cx="8" cy="4" r="1" fill="#ddd"/></svg></span><span class="lock"></span><span class="tag"></span><span class="name"><i class="thumbnail"></i>图层 1</span><span class="target"><svg width="10" height="10"><circle cx="5" cy="5" r="3.500" fill="none" stroke="#bbb" stroke-width="1.500"/></svg></span></div>
          </div>
          <div class="foot"><span class="count">1 个图层</span><div class="icons"><svg class="off" width="12" height="12"><circle cx="7.500" cy="4.500" r="3.500" fill="none" stroke="#aaa" stroke-width="1.500"/><path d="M5 7l-4 4" stroke="#aaa" stroke-width="2"/></svg><svg class="off" width="12" height="12"><path d="M1 1h7v7H1zM4 4h7v7H4z" fill="none" stroke="#aaa" stroke-width="1.500"/></svg><svg width="15" height="12"><path d="M5 2h9v9h-4V6H5z" fill="#bbb"/><path d="M0 1v3h5M3 2l2 2-2 2M6 8h3v3z" fill="none" stroke="#ccc"/></svg><svg width="12" height="12"><use href="#i-new"/></svg><svg class="off" width="12" height="12"><use href="#i-trash"/></svg></div><span class="gripgap"></span></div>
        </div>
      </section>

      <section class="panel last">
        <div class="tabs"><button class="on sort"><svg width="6" height="10"><use href="#i-sort"/></svg>变换</button><button>对齐</button><svg class="fly" width="15" height="9"><use href="#i-menu"/></svg></div>
        <div class="body transform">
          <svg class="ref" width="20" height="20"><path d="M1 3h18M1 10h18M1 17h18M3 1v18M10 1v18M17 1v18" stroke="#bbb"/><path d="M.5.500h4v4h-4zM7.500.500h4v4h-4zM14.500.500h4v4h-4zM.5 7.500h4v4h-4zM7.500 7.500h4v4h-4zM14.500 7.500h4v4h-4zM.5 14.500h4v4h-4zM7.500 14.500h4v4h-4zM14.500 14.500h4v4h-4z" fill="#444" stroke="#ccc"/></svg>
          <label for="tx">X:</label><input class="box" id="tx" value="0 mm" disabled>
          <label for="tw">宽:</label><input class="box" id="tw" value="0 mm" disabled>
          <button class="link" aria-label="约束宽高"><svg width="10" height="14"><path d="M2 5V3q0-2 3-2t3 2v2M2 9v2q0 2 3 2t3-2V9M5 4v6" fill="none" stroke="#ccc" stroke-width="1.500"/></svg></button>
          <label for="ty">Y:</label><input class="box" id="ty" value="0 mm" disabled>
          <label for="th">高:</label><input class="box" id="th" value="0 mm" disabled>
          <label for="ta"><svg width="12" height="9"><path d="M11 8.500H1L10 1M6 4q2 2 2 4" fill="none" stroke="#888"/></svg>:</label><div class="combo dis"><input class="flush" id="ta" value="0°" disabled><button class="arr" disabled></button></div>
          <label for="ts"><svg width="12" height="9"><path d="M1 8.500L5 .500h3L4 8.500zM6 8.500l4-8" fill="none" stroke="#888"/></svg>:</label><div class="combo dis"><input class="flush" id="ts" value="0°" disabled><button class="arr" disabled></button></div>
        </div>
      </section>
    </aside>
  </div>

  <div class="mark">
    <div class="brand"><span>Bai</span><svg width="68" height="72" viewBox="0 0 68 72"><ellipse cx="9" cy="27" rx="8" ry="11"/><ellipse cx="26" cy="11" rx="8" ry="11"/><ellipse cx="46" cy="13" rx="8" ry="11"/><ellipse cx="60" cy="33" rx="8" ry="11"/><path d="M34 30c9 0 12 9 18 14 14 11 10 28-4 28-6 0-8-2-14-2s-9 2-15 2C5 72 2 56 14 46c8-6 11-16 20-16z"/><text x="34" y="65" text-anchor="middle">du</text></svg><span class="cn">经验</span></div>
    <div class="site">jingyan.baidu.com</div>
  </div>
</div>
</body>
</html>
```
FILE: styles.css
```css
:root {
  --tri: url("data:image/svg+xml,%3Csvg xmlns='http://www.w3.org/2000/svg' width='7' height='5'%3E%3Cpath d='M0 0h7L3.5 5z' fill='%23ccc'/%3E%3C/svg%3E");
  --line: #2a2a2a;
  --face: #494949;
  --raised: linear-gradient(#646464, #525252);
}
* { box-sizing: border-box; }
body { margin: 0; background: var(--face); color: #e4e4e4; font: 12px/16px "Liberation Sans", "Noto Sans CJK SC", sans-serif; }
button, input, select { margin: 0; padding: 0; border: 0; border-radius: 0; background: none; color: inherit; font: inherit; }
svg { display: block; flex: none; }
.defs { position: absolute; width: 0; height: 0; }
.app { position: relative; display: flex; flex-direction: column; height: 100vh; overflow: hidden; }

/* menu bar */
.menubar { display: flex; align-items: center; flex: none; height: 32px; padding-left: 9px; border-bottom: 1px solid var(--line); font-family: "Noto Sans", "Noto Sans CJK SC", sans-serif; }
.logo { align-self: flex-start; width: 38px; color: #dd9632; font: bold 21px/30px "Noto Sans CJK SC", sans-serif; }
.menus { display: flex; gap: 19px; margin-right: 15px; }
.menus button { white-space: nowrap; }
.menus u { text-underline-offset: 2px; }
.vsep { flex: none; width: 2px; height: 22px; background: #383838; border-right: 1px solid #5c5c5c; }
.bridge { width: 17px; height: 17px; margin: 0 22px 0 15px; border: 1px solid #aaa; background: linear-gradient(#999, #6c6c6c); color: #222; font: bold 9px/14px "Liberation Sans", sans-serif; }
.right { display: flex; align-items: center; align-self: stretch; margin-left: auto; padding-right: 2px; }
.workspace { display: flex; align-items: center; gap: 9px; margin: 0 13px 4px 10px; }
.winbtns { display: flex; align-self: flex-start; border: 1px solid #1f1f1f; border-top: 0; border-radius: 0 0 3px 3px; }
.winbtns button { display: flex; align-items: center; justify-content: center; width: 28px; height: 18px; background: linear-gradient(#5e5e5e, #3e3e3e); border-right: 1px solid #1f1f1f; }
.winbtns .close { width: 46px; border-right: 0; }
.tri { flex: none; width: 10px; height: 6px; background: #d4d4d4; clip-path: polygon(0 0, 100% 0, 50% 100%); }
.tri.small { width: 6px; height: 4px; margin-top: 4px; }
.tri.up { clip-path: polygon(50% 0, 100% 100%, 0 100%); }
.tri.lt { width: 6px; height: 10px; clip-path: polygon(100% 0, 100% 100%, 0 50%); }
.tri.rt { width: 6px; height: 10px; clip-path: polygon(0 0, 100% 50%, 0 100%); }
.tri.dim { width: 8px; height: 5px; background: #808080; }

/* options bar */
.options { display: flex; align-items: center; gap: 6px; flex: none; height: 34px; padding: 0 17px 0 5px; border-top: 1px solid #5e5e5e; border-bottom: 1px solid var(--line); white-space: nowrap; }
.options > * { flex: none; }
.vgrip { width: 3px; height: 20px; background: repeating-linear-gradient(#1c1c1c 0 1px, transparent 1px 2px); }
.state { width: 80px; }
.hot { margin-left: 3px; color: #e68a2e; border-bottom: 1px dotted #e68a2e; line-height: 15px; }
.hot.first { margin-left: 8px; }
.picker { display: flex; width: 34px; height: 19px; border: 1px solid var(--line); }
.chip { flex: 1; border-right: 1px solid var(--line); }
.chip.white { background: #fff; }
.chip.light { background: #e2e2e2; }
.chip.ring { margin: 0; border: 1px solid #fff; background: linear-gradient(#555, #555) center / 5px 5px no-repeat, linear-gradient(#fff, #fff) center / 7px 7px no-repeat, linear-gradient(#000, #000) center / 9px 9px no-repeat, linear-gradient(#fff, #fff) center / 11px 11px no-repeat, #000; }
.arr { flex: none; width: 14px; background: var(--tri) center no-repeat, var(--raised); }
.stylelab { width: 30px; }
.push { min-width: 70px; height: 20px; padding: 0 10px; border: 1px solid var(--line); background: var(--raised); line-height: 18px; }
.push + .push { padding: 0 16px; }
.similar { margin-left: 4px; }
.options .optmenu { margin-left: auto; }

/* fields */
.combo { display: flex; height: 19px; border: 1px solid var(--line); }
.combo input, .box { flex: 1; min-width: 0; width: 0; padding: 0 0 0 4px; background: #a2a2a2; color: #111; font: 11px/14px "Liberation Mono", monospace; }
.combo input.flush { padding-left: 3px; }
.combo .arr { border-left: 1px solid var(--line); width: 15px; }
.spin { display: grid; width: 15px; border-right: 1px solid var(--line); }
.spin button { background: var(--tri) center / 5px 4px no-repeat, var(--raised); }
.spin button:first-child { transform: rotate(180deg); border-top: 1px solid var(--line); }
.drop { position: relative; height: 19px; border: 1px solid var(--line); }
.drop::after { content: ""; position: absolute; top: 0; right: 0; bottom: 0; width: 15px; border-left: 1px solid var(--line); background: var(--tri) center no-repeat, var(--raised); pointer-events: none; }
.drop select { display: block; appearance: none; width: 100%; height: 100%; background: #e2e2e2; color: #111; }
.drop .uniform { padding-left: 60px; background: linear-gradient(#000, #000) 6px 50% / 49px 2px no-repeat, #e2e2e2; }
.drop .uniform.long { padding-left: 63px; background-size: 52px 2px, auto; }
.drop .dot { padding-left: 21px; background: radial-gradient(circle at 8px 50%, #000 2px, transparent 3px), #e2e2e2; }
.drop .plain { background: linear-gradient(#000, #000) 6px 50% / 24px 1px no-repeat, #e2e2e2; }
.w53 { width: 53px; }
.w58 { width: 58px; }
.w67 { width: 67px; }
.w78 { width: 78px; }
.w84 { width: 84px; }
.w105 { width: 105px; }
.w107 { width: 107px; }
.w110 { width: 110px; }

/* workspace */
.work { display: flex; flex: 1; min-height: 0; }
.toolbox { display: flex; flex-direction: column; align-items: center; flex: none; width: 40px; border-left: 1px solid var(--line); border-right: 1px solid var(--line); background: #474747; }
.collapse { align-self: stretch; height: 12px; background: #2f2f2f; border-bottom: 1px solid var(--line); }
.collapse button { display: grid; place-items: center; width: 16px; height: 11px; background: #4c4c4c; }
.hgrip { flex: none; width: 20px; height: 4px; margin: 4px 0 8px; background: repeating-linear-gradient(90deg, #161616 0 1px, transparent 1px 2px); }
.tools { flex: none; width: 30px; }
.tools hr { height: 2px; margin: 0; border: 0; background: #3a3a3a; border-bottom: 1px solid #565656; }
.tool { display: block; width: 28px; height: 24px; margin: 0 1px; }
.tool svg { width: 28px; height: 24px; }
.tool.on { background: #333; box-shadow: inset 0 0 0 1px #282828; }
.tool.more { background: linear-gradient(135deg, transparent 45%, #ddd 50%) 23px 19px / 4px 4px no-repeat; }
.tglyph { fill: #c8c8c8; font: 20px "Liberation Serif", serif; }
.paint { width: 30px; height: 118px; }

.doc { display: flex; flex-direction: column; flex: 1; min-width: 0; margin-left: 1px; border-left: 1px solid var(--line); }
.doctabs { display: flex; flex: none; height: 20px; background: #313131; border-bottom: 1px solid var(--line); font-family: "DejaVu Sans", "Noto Sans CJK SC", sans-serif; }
.doctab { display: flex; align-items: center; gap: 12px; padding: 0 7px 0 10px; background: var(--face); border-right: 1px solid var(--line); color: #ccc; white-space: nowrap; }
.view { display: flex; flex: 1; min-height: 0; }
.canvas { display: flex; flex: 1; padding: 24px 76px 23px 77px; background: #5e5e5e; }
.artboard { flex: 1; border: 1px solid #000; background: #fff; }
.vscroll, .hscroll { display: flex; align-items: center; justify-content: space-between; background: #373737; }
.vscroll { flex-direction: column; flex: none; width: 17px; padding: 6px 0; border-left: 1px solid var(--line); border-right: 1px solid var(--line); }
.thumb { flex: none; width: 15px; height: 15px; background: #959595; }
.status { display: flex; flex: none; height: 14px; overflow: hidden; padding-left: 4px; border-top: 1px solid var(--line); }
.status > * { flex: none; }
.status .nav { margin: 3px 8px; }
.status .combo { height: 17px; }
.toolname { width: 200px; height: 16px; border-left: 1px solid var(--line); text-align: center; }
.play { display: grid; place-items: center; width: 20px; height: 16px; border-left: 1px solid var(--line); }
.status .hscroll { flex: 1; height: 16px; padding: 0 6px; border-left: 1px solid var(--line); }
.hscroll .tri { background: #e0e0e0; }
.corner { width: 17px; border-left: 1px solid var(--line); }

/* dock */
.dock { flex: none; width: 233px; overflow: hidden; border: solid #262626; border-width: 0 1px 0 2px; background: #262626; }
.dockhead { display: flex; justify-content: flex-end; height: 12px; padding: 2px 3px; background: #333; border-bottom: 1px solid #262626; }
.panel { margin-bottom: 3px; background: var(--face); }
.tabs { display: flex; height: 18px; background: #313131; font-family: "Noto Sans CJK SC", sans-serif; }
.tabs button { display: flex; align-items: center; gap: 3px; padding: 0 7px; border-right: 1px solid #222; border-bottom: 1px solid #222; color: #8a8a8a; }
.tabs .on { padding: 0 8px; border-bottom-color: var(--face); background: var(--face); color: #ddd; }
.tabs .on.sort { padding: 0 6px 0 4px; }
.fly { margin: 4px 3px 0 auto; }
.body { padding: 6px 4px 0 5px; }
.list { display: flex; border: 1px solid var(--line); }
.h102 { height: 102px; }
.pscroll { display: flex; flex-direction: column; align-items: center; justify-content: space-between; width: 12px; padding: 4px 0; margin-left: auto; background: #393939; border-left: 1px solid #333; }
.sws { display: flex; flex-wrap: wrap; gap: 1px; width: 197px; margin-bottom: 2px; padding-bottom: 1px; }
.sw { display: block; width: 13px; height: 13px; box-shadow: 1px 1px 0 #686868; }
.sw.sel { box-shadow: inset 0 0 0 1px #fff, 1px 1px 0 #686868; }
.fold { background: #5c5c5c; }
.foot { display: flex; align-items: center; height: 19px; padding-left: 3px; }
.foot .icons { display: flex; align-items: center; gap: 14px; margin-left: auto; padding-right: 27px; }
.foot .grip { align-self: flex-end; margin: 0 -4px 0 -10px; }
.gripgap { width: 1px; margin-right: -5px; }
.off { opacity: .45; }

/* stroke panel */
.stroke { padding: 3px 4px 2px 5px; }
.stroke hr { height: 2px; margin: 3px 0; border: 0; background: #373737; border-bottom: 1px solid #5a5a5a; }
.stroke .dashes + hr { margin-bottom: 1px; }
.stroke .dimmed + hr { margin: 1px 0 0; }
.row { display: flex; align-items: center; height: 26px; white-space: nowrap; }
.row.tall { height: 30px; }
.row.tall:last-child { height: 32px; }
.row.dimmed { color: #8c8c8c; }
.lab { width: 52px; margin-right: 4px; text-align: right; line-height: 18px; }
.second { margin-left: 14px; }
.end { margin-left: auto; }
.row.tall .end { margin-right: 6px; }
.seg { display: flex; border: 1px solid var(--line); }
.seg button { display: grid; place-items: center; width: 23px; height: 17px; border-right: 1px solid var(--line); background: var(--raised); }
.seg button:last-child { border-right: 0; width: 22px; }
.seg .on { background: #333; }
.seg button:disabled { background: #505050; }
.seg button:disabled svg { opacity: .5; }
.seg.wide { margin-left: auto; }
.seg.wide button { width: 39px; }
.limit { display: flex; align-items: center; gap: 4px; margin-left: auto; }
.box { flex: none; width: 37px; height: 19px; border: 1px solid var(--line); }
.dashrow input { appearance: none; width: 12px; height: 12px; margin: 0 5px 0 1px; border: 1px solid var(--line); background: #5a5a5a; }
.dashes { display: grid; grid-template-columns: repeat(6, 1fr); gap: 2px; padding: 4px 2px 0 1px; color: #8c8c8c; text-align: center; line-height: 15px; }
.dashes input { display: block; width: 100%; height: 19px; border: 1px solid var(--line); background: #767676; }
.combo input:disabled, .box:disabled { background: #767676; color: #333; }
.spin button:disabled, .arr:disabled { filter: brightness(.8); }

/* graphic styles */
.styles { display: grid; grid-template-columns: repeat(6, 32px); gap: 1px; align-content: start; }
.styles button { height: 32px; background: #e4e4e4; box-shadow: 1px 1px 0 #666; }

/* layers */
.layers { height: 128px; display: block; }
.layer { display: flex; height: 21px; background: #5b6473; border-bottom: 1px solid #333; }
.layer > * { border-right: 1px solid #2e2e2e; }
.eye { display: grid; place-items: center; width: 21px; }
.lock { width: 21px; }
.tag { width: 6px; border-left: 1px solid #2e2e2e; background: #4f80ff; }
.name { display: flex; align-items: center; flex: 1; gap: 5px; padding-left: 21px; }
.thumbnail { width: 18px; height: 18px; border: 1px solid #000; background: #fff; }
.layer .target { display: grid; place-items: center start; width: 35px; padding-left: 4px; border-right: 0; background: linear-gradient(45deg, transparent 50%, #ddd 50%) right top / 5px 5px no-repeat; }
.count { margin-left: -2px; white-space: nowrap; }

/* transform */
.transform { display: grid; grid-template-columns: 20px 27px 56px 26px 56px 1fr; grid-auto-rows: 26px; align-items: center; align-content: start; height: 120px; padding-top: 3px; color: #8c8c8c; }
.transform .ref { grid-row: 1 / 3; }
.transform label { display: flex; justify-content: flex-end; align-items: center; padding-right: 4px; }
.transform .box { width: 100%; padding-left: 3px; }
.transform #ty { grid-column: 3; }
.transform label[for="ty"], .transform label[for="ta"] { grid-column: 2; }
.transform .link { grid-row: 1 / 3; grid-column: 6; display: grid; place-items: center; width: 24px; height: 24px; margin-left: 5px; border: 1px solid #222; background: #383838; }

/* watermark laid over the dock */
.mark { position: absolute; right: 70px; bottom: 28px; color: #fff; opacity: .74; pointer-events: none; }
.brand { display: flex; align-items: flex-end; height: 77px; padding: 0 0 3px 2px; font: bold 50px/44px "Liberation Sans", sans-serif; }
.brand span { width: 77px; }
.brand svg { fill: #fff; }
.brand svg text { fill: #555; font: bold 32px "Liberation Sans", sans-serif; }
.brand .cn { width: 78px; margin-left: 2px; font: bold 38px/44px "Noto Sans CJK SC", sans-serif; }
.site { font: 500 26px/32px "Noto Sans", sans-serif; }
```
